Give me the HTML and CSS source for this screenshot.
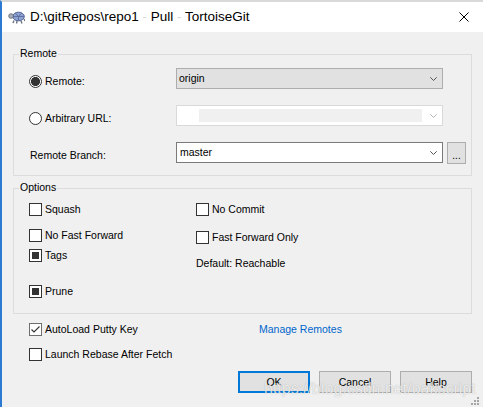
FILE: index.html
```html
<!DOCTYPE html>
<html>
<head>
<meta charset="utf-8">
<link rel="stylesheet" href="styles.css">
</head>
<body>
<div class="window">
  <div class="titlebar">
    <svg class="app-icon" viewBox="0 0 17 14" width="17" height="14">
      <ellipse cx="10.5" cy="6.5" rx="5.8" ry="4.3" fill="#8fa3d0" stroke="#4d5f93" stroke-width="1"/>
      <path d="M7.5 3.2 L10.5 6.5 L13.5 3.2 M10.5 6.5 V10.5 M5 6.5 H16" stroke="#52639a" stroke-width="0.8" fill="none"/>
      <circle cx="3" cy="6" r="2.3" fill="#a9b0bd" stroke="#5d6470" stroke-width="0.8"/>
      <path d="M6 10.5 L5 13 M9 11 L8.5 13.5 M13 11 L14 13.5 M16 9 L17 11" stroke="#6b7280" stroke-width="1.4" fill="none"/>
    </svg>
    <span class="title">D:\gitRepos\repo1<span class="sep"> - </span>Pull<span class="sep"> - </span>TortoiseGit</span>
    <svg class="close" viewBox="0 0 10 10" width="10" height="10">
      <path d="M0.5 0.5 L9.5 9.5 M9.5 0.5 L0.5 9.5" stroke="#000" stroke-width="1" fill="none"/>
    </svg>
  </div>

  <div class="client">
    <section class="group group-remote">
      <div class="group-title">Remote</div>
      <div class="remote-grid">
        <div class="opt"><span class="radio checked"></span><span>Remote:</span></div>
        <div class="combo combo-ro">
          <span class="combo-text">origin</span>
          <svg class="chev" viewBox="0 0 7 4" width="7" height="4"><path d="M0.3 0.3 L3.5 3.5 L6.7 0.3" stroke="#555" stroke-width="1" fill="none"/></svg>
        </div>
        <span></span>

        <div class="opt"><span class="radio"></span><span>Arbitrary URL:</span></div>
        <div class="combo combo-disabled">
          <span class="combo-inner"></span>
          <svg class="chev" viewBox="0 0 7 4" width="7" height="4"><path d="M0.3 0.3 L3.5 3.5 L6.7 0.3" stroke="#b5b5b5" stroke-width="1" fill="none"/></svg>
        </div>
        <span></span>

        <div class="opt opt-plain"><span>Remote Branch:</span></div>
        <div class="combo combo-edit">
          <span class="combo-text">master</span>
          <svg class="chev" viewBox="0 0 7 4" width="7" height="4"><path d="M0.3 0.3 L3.5 3.5 L6.7 0.3" stroke="#555" stroke-width="1" fill="none"/></svg>
        </div>
        <button class="btn-dots">...</button>
      </div>
    </section>

    <section class="group group-options">
      <div class="group-title">Options</div>
      <div class="options-cols">
        <div class="col col-left">
          <div class="check"><span class="box"></span><span>Squash</span></div>
          <div class="check mt13"><span class="box"></span><span>No Fast Forward</span></div>
          <div class="check mt7"><span class="box ind"></span><span>Tags</span></div>
          <div class="check mt23"><span class="box ind"></span><span>Prune</span></div>
        </div>
        <div class="col col-right">
          <div class="check"><span class="box"></span><span>No Commit</span></div>
          <div class="check mt15"><span class="box"></span><span>Fast Forward Only</span></div>
          <div class="plain mt13">Default: Reachable</div>
        </div>
      </div>
    </section>

    <div class="bottom">
      <div class="check"><span class="box checked">
        <svg viewBox="0 0 11 11" width="11" height="11"><path d="M1.5 5.5 L4 8 L9.5 2.5" stroke="#333" stroke-width="1.1" fill="none"/></svg>
      </span><span>AutoLoad Putty Key</span></div>
      <a class="link">Manage Remotes</a>
      <div class="check"><span class="box"></span><span>Launch Rebase After Fetch</span></div>
    </div>

    <div class="buttons">
      <button class="btn btn-default">OK</button>
      <button class="btn">Cancel</button>
      <button class="btn">Help</button>
    </div>
  </div>

  <div class="watermark">https://blog.csdn.net/oakscript</div>
  <svg class="grip" viewBox="0 0 8 8" width="8" height="8">
    <rect x="6" y="0" width="2" height="2" fill="#a6a6a6"/>
    <rect x="3" y="3" width="2" height="2" fill="#a6a6a6"/>
    <rect x="6" y="3" width="2" height="2" fill="#a6a6a6"/>
    <rect x="0" y="6" width="2" height="2" fill="#a6a6a6"/>
    <rect x="3" y="6" width="2" height="2" fill="#a6a6a6"/>
    <rect x="6" y="6" width="2" height="2" fill="#a6a6a6"/>
  </svg>
</div>
</body>
</html>
```

FILE: styles.css
```css
html, body {
  margin: 0;
  padding: 0;
  background: #f0f0f0;
}

body {
  font-family: "Liberation Sans", Arial, sans-serif;
  font-size: 10.5px;
  color: #000;
}

.window {
  position: relative;
  width: 483px;
  height: 407px;
  box-sizing: border-box;
  border-left: 2px solid #2d7ad2;
  border-top: 2px solid #d9d9d9;
  display: flex;
  flex-direction: column;
  overflow: hidden;
  background: #f0f0f0;
}

/* ---------- title bar ---------- */
.titlebar {
  flex: none;
  height: 30px;
  background: #fff;
  display: flex;
  align-items: center;
  padding: 0 14px 0 6px;
}

.app-icon {
  flex: none;
}

.title {
  margin-left: 5px;
  font-size: 13.5px;
  line-height: 16px;
  color: #000;
  white-space: pre;
}

.sep {
  color: #d8d8d8;
}

.close {
  margin-left: auto;
  flex: none;
}

/* ---------- client ---------- */
.client {
  flex: 1;
  display: flex;
  flex-direction: column;
  padding: 0 11px;
}

.group {
  border: 1px solid #dcdcdc;
  display: flex;
  flex-direction: column;
}

.group-title {
  align-self: flex-start;
  margin: -8px 0 0 5px;
  padding: 0 1px;
  line-height: 13px;
  background: #f0f0f0;
}

.group-remote {
  margin-top: 22px;
  padding-bottom: 12px;
}

.remote-grid {
  display: grid;
  grid-template-columns: 143px 267px 19px;
  grid-auto-rows: 21px;
  column-gap: 4px;
  row-gap: 16px;
  margin: 8px 0 0 15px;
}

.opt {
  display: flex;
  align-items: center;
  gap: 3px;
  padding-top: 6px;
  line-height: 13px;
}

.opt-plain {
  padding-left: 1px;
}

.radio {
  flex: none;
  width: 13px;
  height: 13px;
  box-sizing: border-box;
  border: 1px solid #333;
  border-radius: 50%;
  background: #fff;
}

.radio.checked {
  background: radial-gradient(circle, #333 0 4.2px, #fff 4.8px);
}

.combo {
  box-sizing: border-box;
  height: 21px;
  display: flex;
  align-items: center;
  padding: 0 5px 0 2px;
  border: 1px solid #adadad;
  line-height: 13px;
}

.combo-ro {
  background: #e1e1e1;
  border-color: #adadad;
}

.combo-disabled {
  background: #fff;
  border-color: #d9d9d9;
}

.combo-inner {
  height: 13px;
  flex: 1;
  margin: 0 8px 0 20px;
  background: #f0f0f0;
}

.combo-edit {
  background: #fff;
  border-color: #7a7a7a;
  padding-left: 3px;
}

.chev {
  margin-left: auto;
  flex: none;
}

.btn-dots {
  box-sizing: border-box;
  height: 22px;
  width: 19px;
  padding: 0 0 2px;
  border: 1px solid #adadad;
  background: #e1e1e1;
  font: inherit;
  font-size: 10px;
  display: flex;
  align-items: flex-end;
  justify-content: center;
  color: #000;
}

/* ---------- options ---------- */
.group-options {
  margin-top: 12px;
  padding-bottom: 15px;
}

.options-cols {
  display: flex;
  margin: 9px 0 0 15px;
}

.col {
  display: flex;
  flex-direction: column;
  align-items: flex-start;
}

.col-left {
  width: 167px;
}

.check {
  display: flex;
  align-items: center;
  gap: 3px;
  height: 13px;
  line-height: 13px;
}

.plain {
  line-height: 13px;
}

.box {
  flex: none;
  width: 13px;
  height: 13px;
  box-sizing: border-box;
  border: 1px solid #333;
  background: #fff;
  display: flex;
}

.box.ind {
  background: #333;
  box-shadow: inset 0 0 0 2px #fff;
}

.box.checked {
  border-color: #6f6f6f;
}

.mt7 { margin-top: 7px; }
.mt13 { margin-top: 13px; }
.mt15 { margin-top: 15px; }
.mt23 { margin-top: 23px; }

/* ---------- bottom ---------- */
.bottom {
  display: grid;
  grid-template-columns: 230px auto;
  row-gap: 12px;
  margin: 9px 0 0 16px;
}

.link {
  color: #0066cc;
  line-height: 13px;
  justify-self: start;
}

.buttons {
  display: flex;
  justify-content: flex-end;
  gap: 9px;
  margin-top: 10px;
}

.btn {
  box-sizing: border-box;
  width: 72px;
  height: 22px;
  padding: 0;
  border: 1px solid #adadad;
  background: #e1e1e1;
  font: inherit;
  color: #000;
}

.btn-default {
  border: 2px solid #0078d7;
}

/* ---------- overlays ---------- */
.watermark {
  position: absolute;
  left: 262px;
  top: 378px;
  font-size: 16px;
  line-height: 18px;
  color: rgba(255, 255, 255, 0.78);
  text-shadow: 0 0 1px rgba(0, 0, 0, 0.3);
  white-space: nowrap;
  pointer-events: none;
}

.grip {
  position: absolute;
  right: 4px;
  bottom: 2px;
}
```
